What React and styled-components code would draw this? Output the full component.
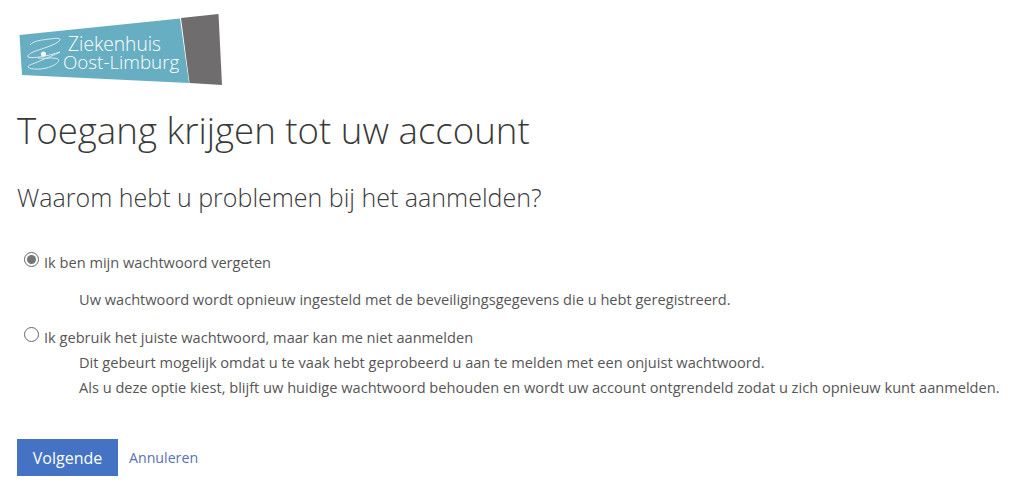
import React from "react";
import styled, { createGlobalStyle } from "styled-components";

const Global = createGlobalStyle`
  html, body { margin: 0; padding: 0; background: #fff; }
  body { font-family: "Open Sans", "Noto Sans", sans-serif; color: #505050; }
`;
const Page = styled.div`
  width: 1019px; height: 496px; box-sizing: border-box; padding: 14px 0 0 17px; overflow: hidden;
  display: flex; flex-direction: column; align-items: flex-start;
`;
const Logo = styled.svg`
  width: 206px; height: 73px; margin-left: 2px; display: block; flex: none;
`;
const Title = styled.h1`
  margin: 18px 0 0; font-size: 36.65px; line-height: 50px; font-weight: 300; color: #3a3a3a;
  white-space: nowrap;
`;
const Subtitle = styled.h2`
  margin: 25px 0 0; font-size: 25px; line-height: 34px; font-weight: 300; color: #3a3a3a; white-space: nowrap;
`;
const Options = styled.div`
  margin-top: 36px; display: flex; flex-direction: column; align-items: flex-start;
`;
const Option = styled.div`
  display: flex; align-items: flex-start; margin-left: 7px; gap: 5px; height: 24px;
`;
const Radio = styled.span`
  width: 15px; height: 15px; box-sizing: border-box; border-radius: 50%; border: 1px solid #666;
  background: #fff; display: flex; align-items: center; justify-content: center; flex: none; margin-top: 2px;
  &::after { content: ""; display: ${p => (p.$on ? "block" : "none")}; width: 9px; height: 9px; border-radius: 50%; background: #757575; }
`;
const Label = styled.label`
  font-size: 14.6px; line-height: 20px; color: #565656; white-space: nowrap; padding-top: 2px;
`;
const Desc = styled.div`
  margin-left: 62px; font-size: 14.6px; line-height: 25px; color: #565656; white-space: nowrap;
  padding-top: ${p => p.$top || 0}px; padding-bottom: ${p => p.$bottom || 0}px;
`;
const Actions = styled.div`
  margin-top: 39px; display: flex; align-items: center; gap: 11px;
`;
const Button = styled.button`
  width: 101px; height: 37px; border: 0; background: #4472c4; color: #fff; padding: 0;
  font-family: inherit; font-size: 16px;
`;
const Cancel = styled.a`
  font-size: 14.2px; color: #5a6fb4; text-decoration: none;
`;

export default function App() {
  return (
    <Page>
      <Global />
      <Logo viewBox="19 15 206 73">
        <polygon points="19.5,36 180,19.5 189,84 22,76" fill="#68aec2" />
        <polygon points="181,19 218.5,15 222,86 189.5,84" fill="#6f6d6e" />
        <text x="68" y="51.5" fontFamily="Open Sans, sans-serif" fontSize="19.2" fontWeight="300" fill="#fff">Ziekenhuis</text>
        <text x="63" y="70" fontFamily="Open Sans, sans-serif" fontSize="18.8" fontWeight="300" fill="#fff">Oost-Limburg</text>
        <g fill="none" stroke="#e2f1f5" strokeWidth="0.9">
          <path d="M30 46 C33 42 41 41 50 40 C56 39 61 39 60 41 C57 46 40 50 33 53 C29 55 27 57 28 58 C32 60 48 57 60 53" />
          <path d="M60 53 C55 56 46 59 40 62 C33 65 28 66 28 68 C30 71 44 71 52 67 C57 65 60 62 58 60 C54 58 44 60 38 59" />
        </g>
        <circle cx="43.5" cy="55" r="2.6" fill="#eef7f9" />
      </Logo>
      <Title>Toegang krijgen tot uw account</Title>
      <Subtitle>Waarom hebt u problemen bij het aanmelden?</Subtitle>
      <Options>
        <Option>
          <Radio $on />
          <Label>Ik ben mijn wachtwoord vergeten</Label>
        </Option>
        <Desc $top={13} $bottom={13}>Uw wachtwoord wordt opnieuw ingesteld met de beveiligingsgegevens die u hebt geregistreerd.</Desc>
        <Option>
          <Radio />
          <Label>Ik gebruik het juiste wachtwoord, maar kan me niet aanmelden</Label>
        </Option>
        <Desc $top={1}>Dit gebeurt mogelijk omdat u te vaak hebt geprobeerd u aan te melden met een onjuist wachtwoord.</Desc>
        <Desc>Als u deze optie kiest, blijft uw huidige wachtwoord behouden en wordt uw account ontgrendeld zodat u zich opnieuw kunt aanmelden.</Desc>
      </Options>
      <Actions>
        <Button>Volgende</Button>
        <Cancel href="#">Annuleren</Cancel>
      </Actions>
    </Page>
  );
}
